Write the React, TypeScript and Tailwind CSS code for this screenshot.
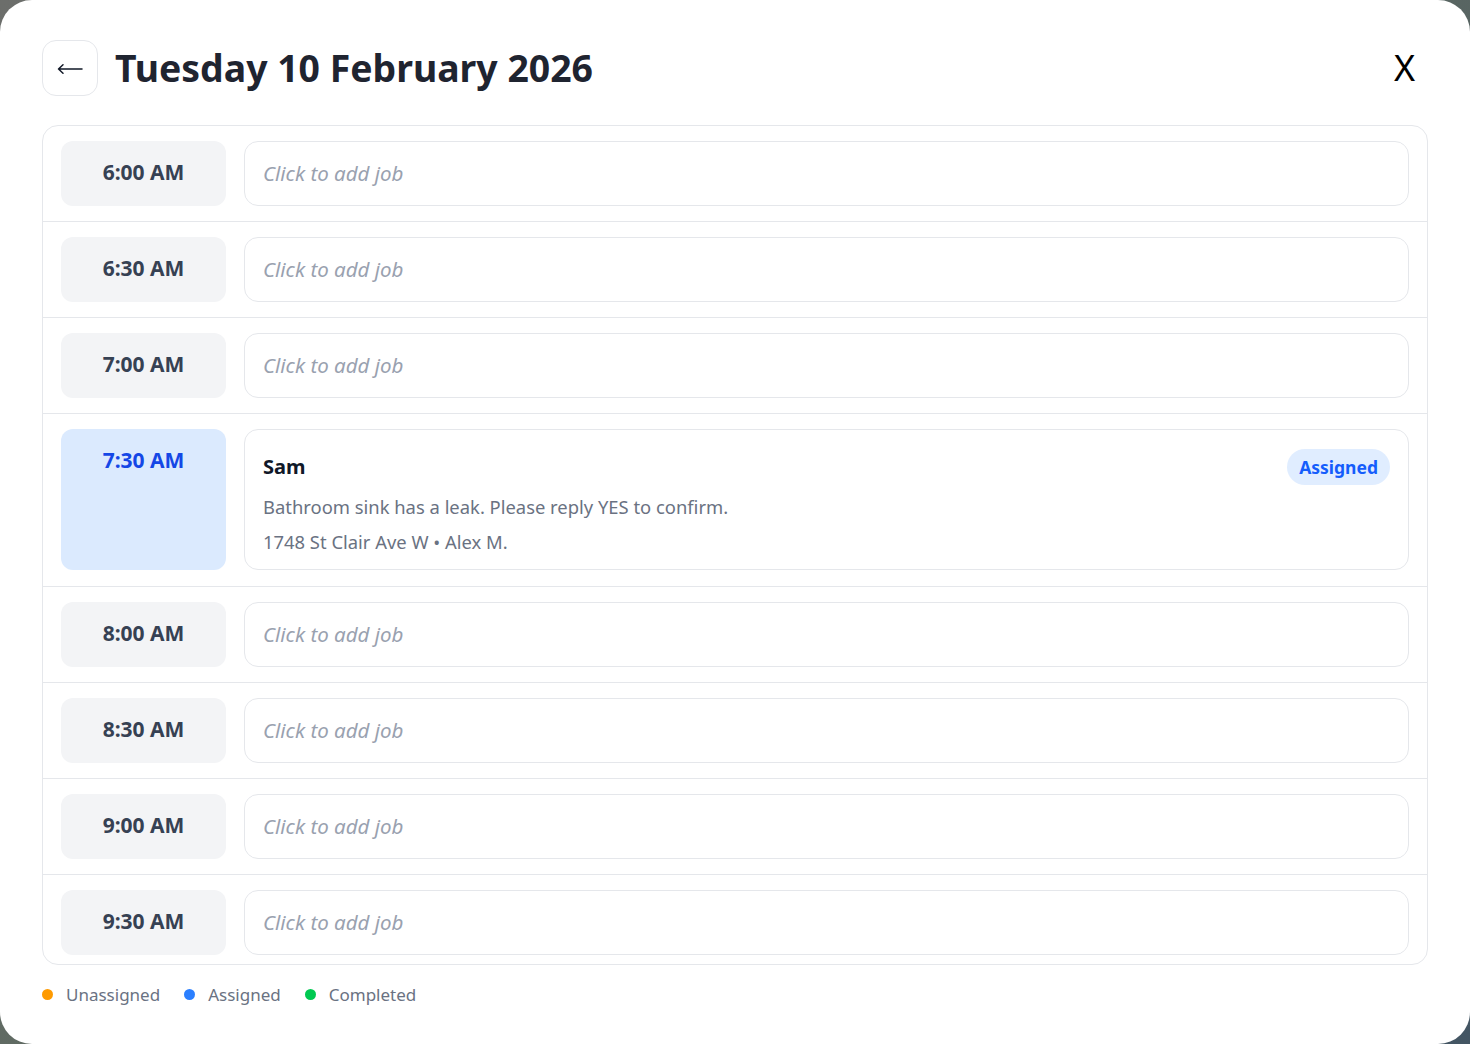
import React from "react";

const slots = ["6:00 AM", "6:30 AM", "7:00 AM", "7:30 AM", "8:00 AM", "8:30 AM", "9:00 AM", "9:30 AM"];

function EmptyRow({ time }: { time: string }) {
  return (
    <div className="flex gap-[18px] border-b border-gray-200 px-[18px] py-[15px]">
      <div className="flex h-[65px] w-[165px] shrink-0 justify-center rounded-[12px] bg-gray-100 pt-[17px] text-[21px] font-bold leading-[28px] text-gray-700">
        {time}
      </div>
      <div className="flex h-[65px] flex-1 items-center rounded-[14px] border border-gray-200 px-[18px] text-[20.5px] italic text-gray-400">
        Click to add job
      </div>
    </div>
  );
}

function JobRow({ time }: { time: string }) {
  return (
    <div className="flex gap-[18px] border-b border-gray-200 px-[18px] pb-[16px] pt-[15px]">
      <div className="flex w-[165px] shrink-0 justify-center rounded-[12px] bg-blue-100 pt-[17px] text-[21px] font-bold leading-[28px] text-blue-700">
        {time}
      </div>
      <div className="flex-1 rounded-[14px] border border-gray-200 px-[18px] pb-[13px] pt-[19px]">
        <div className="flex h-[36px] items-center justify-between">
          <span className="text-[20px] font-bold text-gray-900">Sam</span>
          <span className="flex h-[36px] items-center rounded-full bg-[#e0edff] px-[12px] text-[17.5px] font-bold text-blue-600">
            Assigned
          </span>
        </div>
        <div className="mt-[8px] text-[18.4px] leading-[28px] text-gray-500">
          Bathroom sink has a leak. Please reply YES to confirm.
        </div>
        <div className="mt-[7px] text-[18.4px] leading-[28px] text-gray-500">1748 St Clair Ave W • Alex M.</div>
      </div>
    </div>
  );
}

export default function App() {
  return (
    <div
      className="h-[1044px] w-full bg-[linear-gradient(135deg,#6c6e6b,#5f6a62_45%,#435563)]"
      style={{ fontFamily: '"Noto Sans", "Open Sans", sans-serif' }}
    >
      <div className="flex h-full flex-col rounded-[32px] bg-white px-[42px] pt-[40px]">
        <div className="flex h-[56px] items-center">
          <button className="flex h-[56px] w-[56px] items-center justify-center rounded-[14px] border border-gray-200 pt-[2px] text-gray-900">
            <svg width="26" height="12" viewBox="0 0 26 12" fill="none" stroke="#111827" strokeWidth="1.5" strokeLinecap="round">
              <path d="M1.5 6H25M1.5 6L6 1.8M1.5 6L6 10.2" />
            </svg>
          </button>
          <h1 className="ml-[17px] text-[37.4px] font-bold text-[#1f2430]">Tuesday 10 February 2026</h1>
          <button className="ml-auto flex h-[47px] w-[47px] items-center justify-center text-[36px] text-black">X</button>
        </div>
        <div className="mt-[29px] h-[840px] overflow-hidden rounded-[16px] border border-gray-200">
          {slots.map((t) => (t === "7:30 AM" ? <JobRow key={t} time={t} /> : <EmptyRow key={t} time={t} />))}
        </div>
        <div className="mt-[17px] flex items-center text-[17px] text-gray-500">
          <span className="h-[11px] w-[11px] rounded-full bg-amber-500" />
          <span className="ml-[13px]">Unassigned</span>
          <span className="ml-[24px] h-[11px] w-[11px] rounded-full bg-blue-500" />
          <span className="ml-[13px]">Assigned</span>
          <span className="ml-[24px] h-[11px] w-[11px] rounded-full bg-green-500" />
          <span className="ml-[13px]">Completed</span>
        </div>
      </div>
    </div>
  );
}
